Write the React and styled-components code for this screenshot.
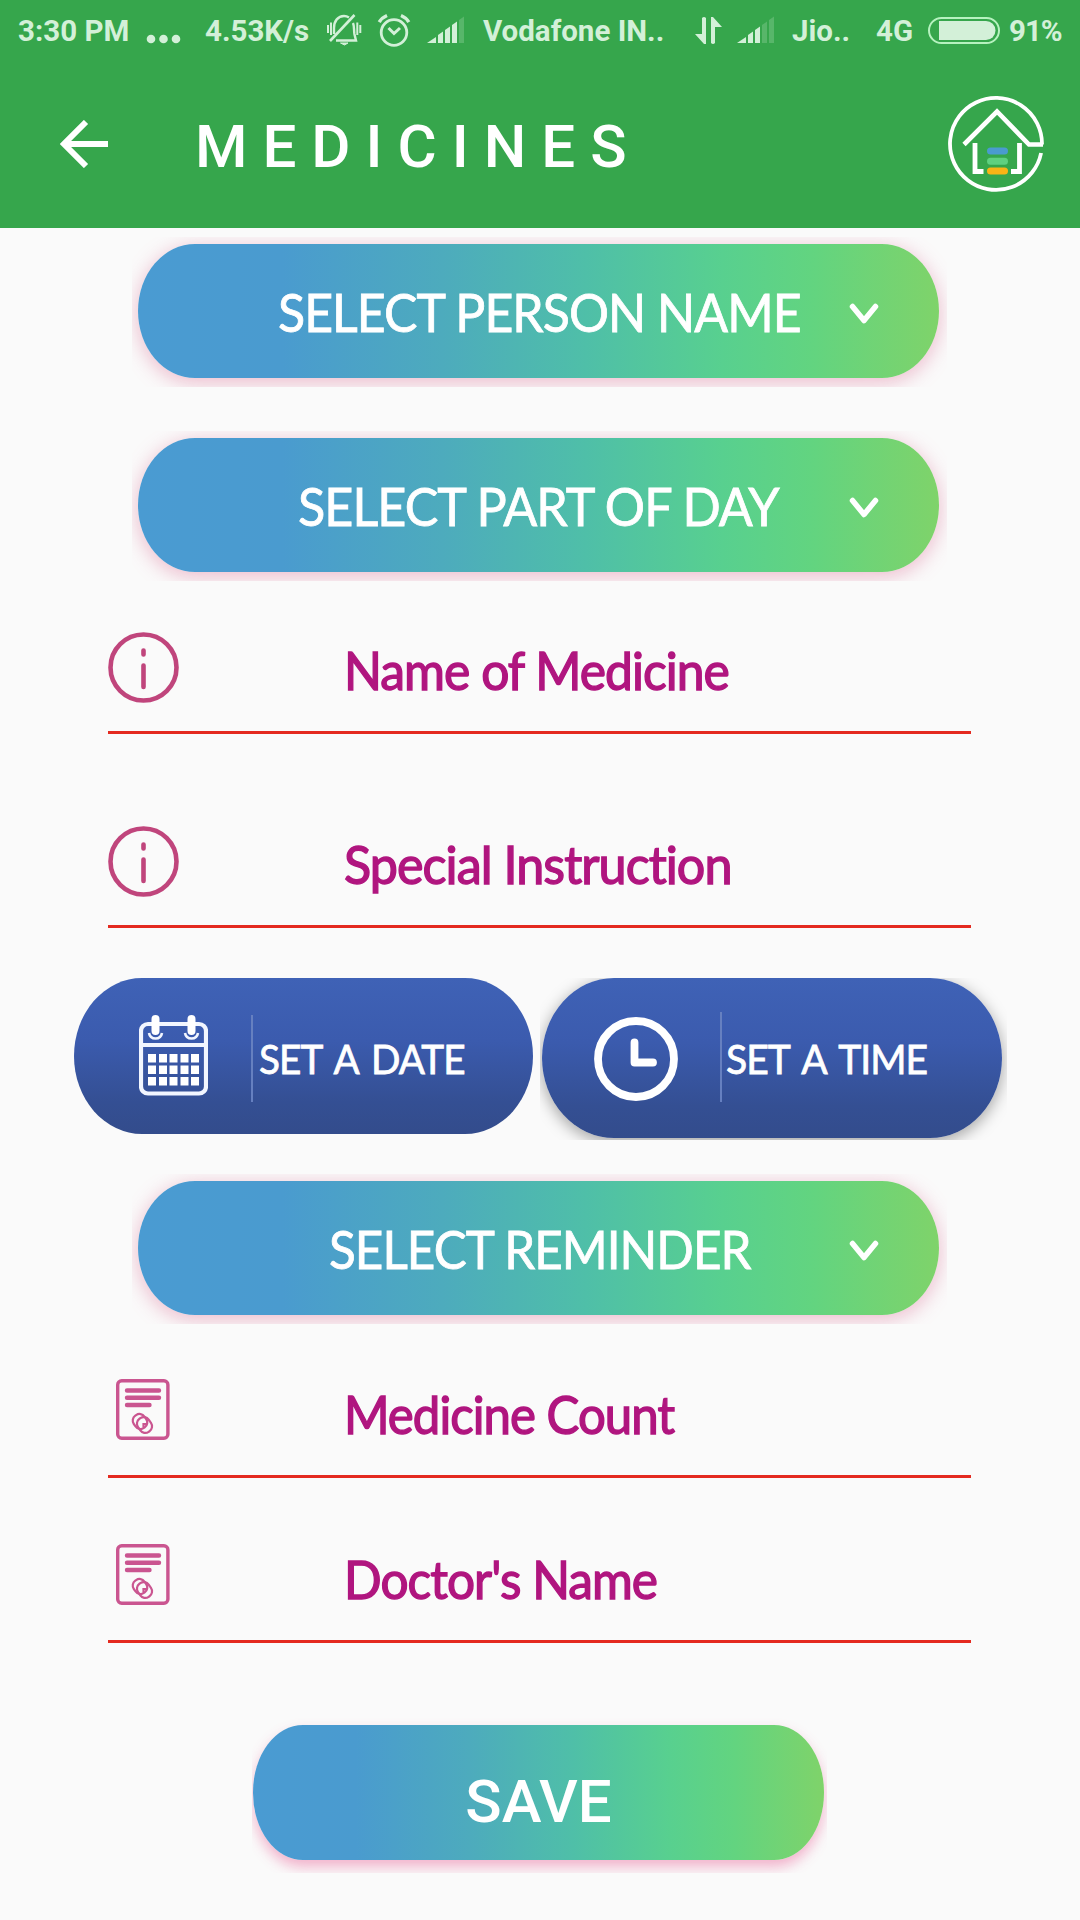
import React from "react";
import styled, { createGlobalStyle } from "styled-components";

const GlobalStyle = createGlobalStyle`
  * {
    box-sizing: border-box;
  }
  body {
    margin: 0;
    background: #fafafa;
  }
`;

const Screen = styled.div`
  width: 1080px;
  height: 1920px;
  overflow: hidden;
  display: flex;
  flex-direction: column;
  background: #fafafa;
`;

const Header = styled.header`
  height: 228px;
  background: #36a64c;
  display: flex;
  flex-direction: column;
`;

const StatusBar = styled.div`
  height: 60px;
  padding-left: 18px;
  display: flex;
  align-items: center;
  color: #d3f0d8;

  svg {
    display: block;
    flex: none;
    overflow: visible;
  }
`;

const StatusItem = styled.div`
  flex: none;
  width: ${(p) => p.$width}px;
`;

const StatusText = styled.span`
  display: block;
  padding-top: 2px;
  font: 700 29.5px/60px Roboto, sans-serif;
  white-space: nowrap;
  letter-spacing: ${(p) => p.$spacing || 0}px;
`;

const Dots = styled.svg`
  margin-top: 18px;
`;

const TitleBar = styled.div`
  height: 168px;
  padding: 0 36px 0 60px;
  display: flex;
  align-items: center;

  svg {
    display: block;
    flex: none;
  }
`;

const Title = styled.h1`
  flex: 1;
  margin: 5px 0 0 87px;
  color: #fff;
  font: 500 60px/80px Roboto, sans-serif;
  letter-spacing: 15px;
`;

const Form = styled.main`
  display: flex;
  flex-direction: column;
`;

/* Clips the soft glow round a pill */
const GlowBox = styled.div`
  width: ${(p) => p.$width || 815}px;
  height: ${(p) => p.$height || 150}px;
  margin: ${(p) => p.$margin};
  padding: ${(p) => p.$pad || "7px 8px 0 6px"};
  overflow: hidden;
`;

const GradientPill = styled.button`
  display: flex;
  align-items: center;
  justify-content: center;
  width: 100%;
  height: ${(p) => p.$height || 134}px;
  padding: 0;
  border: none;
  border-radius: ${(p) => p.$radius || "57px / 67px"};
  color: #fff;
  background: linear-gradient(
    90deg,
    #4a9bd2 0%,
    #4a9bcf 18%,
    #4dabbd 38%,
    #4fbfa8 56%,
    #58d08f 73%,
    #62d480 84%,
    #7fd36a 100%
  );
  box-shadow: ${(p) => p.$shadow || "0 4px 20px rgba(215, 85, 130, 0.4)"};
`;

const PillLabel = styled.span`
  margin-left: ${(p) => p.$left}px;
  padding-top: 1px;
  font: 400 52px/70px Lato, sans-serif;
  letter-spacing: -1px;
  white-space: nowrap;
  transform: scaleX(${(p) => p.$stretch});
  transform-origin: left;
  -webkit-text-stroke: 0.8px #fff;
`;

const Chevron = styled.svg`
  flex: none;
  margin: 5px 60px 0 auto;
`;

const Field = styled.label`
  display: flex;
  width: 863px;
  height: ${(p) => p.$height}px;
  margin: ${(p) => p.$top}px 0 0 108px;
  border-bottom: 3px solid #e42a20;
`;

const FieldIcon = styled.span`
  flex: none;
  width: 236px;
  padding-left: ${(p) => p.$left || 0}px;

  svg {
    display: block;
  }
`;

const FieldText = styled.span`
  padding-top: ${(p) => p.$top}px;
  color: #b0157f;
  font: 400 52px/60px Lato, sans-serif;
  letter-spacing: -1px;
  white-space: nowrap;
  transform: scaleX(${(p) => p.$stretch});
  transform-origin: left;
  -webkit-text-stroke: 1.4px #b0157f;
`;

const PickerRow = styled.div`
  display: flex;
  margin-top: 50px;
  padding-left: 74px;
  height: 162px;
`;

const PickerBox = styled.div`
  overflow: hidden;
  width: ${(p) => p.$width}px;
  padding-left: ${(p) => p.$left || 0}px;
`;

const Picker = styled.button`
  display: flex;
  width: ${(p) => p.$width}px;
  height: ${(p) => p.$height}px;
  padding: 0;
  border: none;
  border-radius: ${(p) => p.$radius};
  background: linear-gradient(180deg, #3f62b6 0%, #3b5bae 40%, #344f93 80%, #334c8c 100%);
  box-shadow: ${(p) => p.$shadow || "none"};
  color: #fff;
`;

const PickerIcon = styled.svg`
  flex: none;
  display: block;
  margin: ${(p) => p.$margin};
`;

const Divider = styled.span`
  flex: none;
  width: 2px;
  height: ${(p) => p.$height}px;
  margin: ${(p) => p.$margin};
  background: #6680c0;
`;

const PickerLabel = styled.span`
  margin: 56px 0 0 ${(p) => p.$left}px;
  font: 400 41px/50px Lato, sans-serif;
  letter-spacing: -1px;
  word-spacing: 5px;
  white-space: nowrap;
  transform: scaleX(${(p) => p.$stretch});
  transform-origin: left;
  -webkit-text-stroke: 0.8px #fff;
`;

const SaveText = styled.span`
  padding-top: 19px;
  font: 500 60px/70px Roboto, sans-serif;
`;

const Signal = ({ bars }) => (
  <svg width="38" height="26" viewBox="0 0 38 26" fill="currentColor">
    <path d="M0 26 L9 20 V26 Z" />
    {[11, 18, 25, 32].map((x, i) => (
      <path
        key={x}
        d={`M${x} 26 V${18 - i * 5} l5 -3.5 V26 Z`}
        opacity={i < bars ? 1 : 0.22}
      />
    ))}
  </svg>
);

const BellOff = () => (
  <svg width="34" height="32" viewBox="0 0 34 32" fill="none" stroke="currentColor" strokeWidth="2.4">
    <path d="M3 27 L27.5 1" strokeWidth="2.6" />
    <path d="M7 20 V14 C7 7 11 2 17 2 C19 2 20.5 2.5 22 3.5" />
    <path d="M26 9 C27.4 12 26.8 16 27.4 20 L29 26.5 H9" />
    <path d="M13.5 29 H21 L17.5 31 Z" fill="currentColor" strokeWidth="1" />
    <path d="M1 11 V19 M4 8.5 V21 M30.3 8.5 V21 M33.3 11 V19" strokeWidth="2" />
  </svg>
);

const Alarm = () => (
  <svg width="32" height="32" viewBox="0 0 32 32" fill="none" stroke="currentColor" strokeWidth="2.8">
    <circle cx="16" cy="18.5" r="12.8" />
    <path d="M10.5 14 L16 19.5 L22 14" strokeWidth="3" />
    <path d="M1.2 8.2 C3 5 5.5 3 9 1.5 M30.8 8.2 C29 5 26.5 3 23 1.5" strokeWidth="3.4" />
  </svg>
);

const DataArrows = () => (
  <svg width="28" height="27" viewBox="0 0 28 27" fill="currentColor">
    <path d="M7 1 Q9 -1 11 1 V27 H9 L0 17 H7 Z" />
    <path d="M16 0 H18 L27 10 H20 V26 Q18 28 16 26 Z" />
  </svg>
);

const Battery = () => (
  <svg width="72" height="27" viewBox="0 0 72 27">
    <rect x="1" y="1" width="70" height="25" rx="12.5" fill="none" stroke="#b6f2bf" strokeWidth="2" />
    <path d="M11 4 H58 A9.5 9.5 0 0 1 58 23 H11 Z" fill="currentColor" />
  </svg>
);

const BackArrow = () => (
  <svg width="48" height="48" viewBox="0 0 48 48" fill="none" stroke="#fff" strokeWidth="6">
    <path d="M26 2 L4 24 L26 46 M4 24 H48" />
  </svg>
);

const HomeLogo = () => (
  <svg width="96" height="96" viewBox="0 0 96 96" fill="none" stroke="#fff">
    <path d="M93.1 57 A46 46 0 1 1 94 48.5" strokeWidth="3.8" />
    <path d="M95 48.5 H81 L49 15.5 L16 48.5" strokeWidth="4.6" />
    <path d="M27 47 V75.5 H35.5 M71.5 47 V75.5 H63" strokeWidth="4.8" />
    <g strokeWidth="7" strokeLinecap="round">
      <path d="M42.5 55 H56.5" stroke="#4a9bcf" />
      <path d="M42.5 65.2 H56.5" stroke="#5fd080" />
      <path d="M42.5 75 H56.5" stroke="#f8b416" />
    </g>
  </svg>
);

const InfoIcon = () => (
  <svg width="71" height="71" viewBox="0 0 71 71" fill="none" stroke="#c0457c">
    <circle cx="35.5" cy="35.5" r="33" strokeWidth="4.6" />
    <path d="M35.5 18.5 V22.5 M35.5 33.5 V55" strokeWidth="4.6" strokeLinecap="round" />
  </svg>
);

const NoteIcon = () => (
  <svg width="54" height="61" viewBox="0 0 54 61" fill="none" stroke="#ca5590">
    <rect x="1.7" y="1.7" width="50.2" height="57.6" rx="4" strokeWidth="3.4" />
    <path d="M11 11.5 H43 M11 18.8 H43 M11 26 H33.5" strokeWidth="4.4" strokeLinecap="round" />
    <g strokeWidth="2.2">
      <rect x="17.5" y="35" width="13" height="15" rx="6" transform="rotate(-35 24 42.5)" />
      <rect x="22" y="38" width="13" height="16" rx="6" transform="rotate(-35 28.5 46)" />
      <path d="M27.5 48.5 V45 H30.5" />
    </g>
  </svg>
);

const CalendarIcon = () => (
  <PickerIcon $margin="37px 0 0 65px" width="69" height="81" viewBox="0 0 69 81" fill="none" stroke="#f2f6ff">
    <rect x="2" y="9" width="65" height="69.5" rx="7" strokeWidth="4.2" />
    <path d="M2 30 H67" strokeWidth="4.2" />
    <path d="M10 18 Q11 23.5 16.5 23.5 Q22 23.5 23 18 M46 18 Q47 23.5 52.5 23.5 Q58 23.5 59 18" strokeWidth="2.6" />
    <path d="M16.5 4 V16 M52.5 4 V16" strokeWidth="8" strokeLinecap="round" stroke="#fff" />
    {[39, 50.5, 62].map((y) =>
      [9, 20, 30.5, 41.5, 52].map((x) => (
        <rect key={`${x}-${y}`} x={x} y={y} width="8" height="8.5" fill="#fff" stroke="none" />
      ))
    )}
  </PickerIcon>
);

const ClockIcon = () => (
  <PickerIcon $margin="39px 0 0 52px" width="84" height="84" viewBox="0 0 84 84" fill="none" stroke="#fff">
    <circle cx="42" cy="42" r="38" strokeWidth="7.8" />
    <path d="M40.5 25.5 V45.5 H59" strokeWidth="7.8" strokeLinecap="round" strokeLinejoin="round" />
  </PickerIcon>
);

const SelectPill = ({ label, left, stretch, margin }) => (
  <GlowBox $margin={margin}>
    <GradientPill>
      <PillLabel $left={left} $stretch={stretch}>{label}</PillLabel>
      <Chevron width="30" height="22" viewBox="0 0 30 22" fill="none" stroke="#fff">
        <path d="M3.5 3.5 L15 17.5 L26.5 3.5" strokeWidth="5.5" strokeLinecap="round" strokeLinejoin="round" />
      </Chevron>
    </GradientPill>
  </GlowBox>
);

const App = () => {
  return (
    <Screen>
      <GlobalStyle />
      <Header>
        <StatusBar>
          <StatusItem $width={129}><StatusText>3:30 PM</StatusText></StatusItem>
          <StatusItem $width={58}>
            <Dots width="34" height="8" viewBox="0 0 34 8" fill="currentColor">
              <circle cx="4" cy="4" r="4.3" />
              <circle cx="16.5" cy="4" r="4.3" />
              <circle cx="29" cy="4" r="4.3" />
            </Dots>
          </StatusItem>
          <StatusItem $width={122}><StatusText>4.53K/s</StatusText></StatusItem>
          <StatusItem $width={51}><BellOff /></StatusItem>
          <StatusItem $width={49}><Alarm /></StatusItem>
          <StatusItem $width={56}><Signal bars={3} /></StatusItem>
          <StatusItem $width={212}><StatusText>Vodafone IN..</StatusText></StatusItem>
          <StatusItem $width={42}><DataArrows /></StatusItem>
          <StatusItem $width={55}><Signal bars={2} /></StatusItem>
          <StatusItem $width={84}><StatusText>Jio..</StatusText></StatusItem>
          <StatusItem $width={52}><StatusText>4G</StatusText></StatusItem>
          <StatusItem $width={81}><Battery /></StatusItem>
          <StatusItem $width={60}><StatusText $spacing={-1}>91%</StatusText></StatusItem>
        </StatusBar>
        <TitleBar>
          <BackArrow />
          <Title>MEDICINES</Title>
          <HomeLogo />
        </TitleBar>
      </Header>

      <Form>
        <SelectPill label="SELECT PERSON NAME" left={140} stretch={0.962} margin="9px 0 0 132px" />
        <SelectPill label="SELECT PART OF DAY" left={160} stretch={0.968} margin="44px 0 0 132px" />

        <Field $top={51} $height={102}>
          <FieldIcon><InfoIcon /></FieldIcon>
          <FieldText $top={8} $stretch={0.957}>Name of Medicine</FieldText>
        </Field>
        <Field $top={92} $height={102}>
          <FieldIcon><InfoIcon /></FieldIcon>
          <FieldText $top={8} $stretch={0.967}>Special Instruction</FieldText>
        </Field>

        <PickerRow>
          <PickerBox $width={466}>
            <Picker $width={459} $height={156} $radius="68px / 78px">
              <CalendarIcon />
              <Divider $height={87} $margin="37px 0 0 43px" />
              <PickerLabel $left={6} $stretch={0.943}>SET A DATE</PickerLabel>
            </Picker>
          </PickerBox>
          <PickerBox $width={467} $left={2}>
            <Picker $width={460} $height={160} $radius="72px / 80px" $shadow="0 4px 16px rgba(0, 0, 0, 0.36)">
              <ClockIcon />
              <Divider $height={90} $margin="34px 0 0 42px" />
              <PickerLabel $left={4} $stretch={0.953}>SET A TIME</PickerLabel>
            </Picker>
          </PickerBox>
        </PickerRow>

        <SelectPill label="SELECT REMINDER" left={191} stretch={0.95} margin="34px 0 0 132px" />

        <Field $top={55} $height={99}>
          <FieldIcon $left={8}><NoteIcon /></FieldIcon>
          <FieldText $top={5} $stretch={0.944}>Medicine Count</FieldText>
        </Field>
        <Field $top={66} $height={99}>
          <FieldIcon $left={8}><NoteIcon /></FieldIcon>
          <FieldText $top={5} $stretch={0.953}>Doctor's Name</FieldText>
        </Field>

        <GlowBox $width={575} $height={156} $margin="74px 0 0 252px" $pad="8px 3px 0 1px">
          <GradientPill $height={135} $radius="50px / 67px" $shadow="0 7px 13px rgba(230, 80, 140, 0.42)">
            <SaveText>SAVE</SaveText>
          </GradientPill>
        </GlowBox>
      </Form>
    </Screen>
  );
};

export default App;
